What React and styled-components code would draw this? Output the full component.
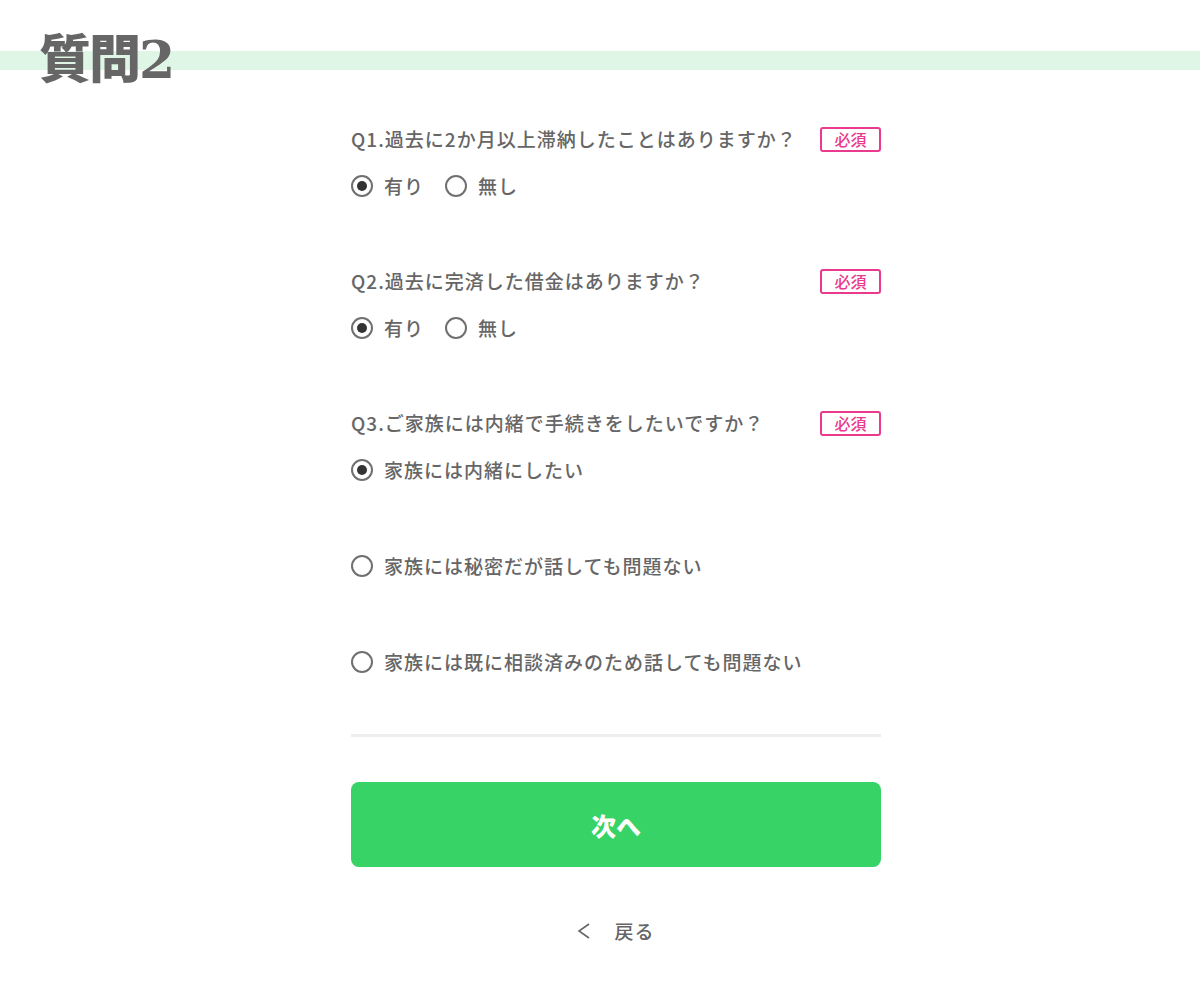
import React from 'react';
import styled, { createGlobalStyle } from 'styled-components';

const GlobalStyle = createGlobalStyle`
  body {
    margin: 0;
    background: #fff;
    font-family: "Noto Sans CJK JP", "Noto Sans", sans-serif;
    color: #666;
  }
`;

const Header = styled.header`
  height: 100px;
  padding: 30px 0 0 39px;
  box-sizing: border-box;
  background: linear-gradient(
    to bottom,
    transparent 51px,
    #dff6e6 51px,
    #dff6e6 70px,
    transparent 70px
  );
`;

const Title = styled.h1`
  margin: 0;
  font-family: "DejaVu Serif", "Noto Sans CJK JP", serif;
  font-size: 52px;
  line-height: 60px;
  font-weight: 900;
  color: #666;
  letter-spacing: -2px;
`;

const Main = styled.main`
  padding: 26px 0 40px 32px;
`;

const Form = styled.form`
  width: 530px;
  margin: 0 auto;
  display: flex;
  flex-direction: column;
`;

const Question = styled.section`
  display: flex;
  flex-direction: column;
  gap: 23px;
  & + & {
    margin-top: 71px;
  }
`;

const QuestionHead = styled.div`
  display: flex;
  align-items: center;
  justify-content: space-between;
  height: 26px;
`;

const QuestionText = styled.p`
  margin: 0;
  font-size: 19px;
  line-height: 26px;
  font-weight: 500;
  letter-spacing: 1px;
  color: #666;
`;

const Required = styled.span`
  width: 61px;
  height: 25px;
  box-sizing: border-box;
  border: 2px solid #ea3a8d;
  border-radius: 3px;
  color: #ea3a8d;
  font-size: 16px;
  font-weight: 500;
  line-height: 21px;
  text-align: center;
`;

const Options = styled.div`
  display: flex;
  flex-direction: ${({ $stacked }) => ($stacked ? 'column' : 'row')};
  gap: ${({ $stacked }) => ($stacked ? '74px' : '21px')};
`;

const Option = styled.label`
  display: flex;
  align-items: center;
  gap: 11px;
  height: 22px;
  font-size: 19px;
  font-weight: 500;
  line-height: 22px;
  letter-spacing: 1px;
  color: #666;
  cursor: pointer;
`;

const Radio = styled.span`
  width: 22px;
  height: 22px;
  box-sizing: border-box;
  border: 2px solid #707070;
  border-radius: 50%;
  display: flex;
  align-items: center;
  justify-content: center;
  flex-shrink: 0;
  &::after {
    content: '';
    width: 10px;
    height: 10px;
    border-radius: 50%;
    background: ${({ $checked }) => ($checked ? '#333' : 'transparent')};
  }
`;

const Divider = styled.hr`
  margin: 61px 0 0;
  border: none;
  height: 3px;
  background: #eeeeee;
`;

const NextButton = styled.button`
  margin-top: 45px;
  height: 85px;
  border: none;
  border-radius: 8px;
  background: #38d366;
  color: #fff;
  font-family: inherit;
  font-size: 25px;
  font-weight: 900;
  cursor: pointer;
`;

const BackLink = styled.a`
  margin-top: 51px;
  align-self: center;
  display: flex;
  align-items: center;
  gap: 23px;
  font-size: 19px;
  font-weight: 500;
  line-height: 26px;
  letter-spacing: 1px;
  color: #666;
  text-decoration: none;
  cursor: pointer;
`;

const questions = [
  {
    id: 'q1',
    text: 'Q1.過去に2か月以上滞納したことはありますか？',
    options: ['有り', '無し'],
    checked: 0,
  },
  {
    id: 'q2',
    text: 'Q2.過去に完済した借金はありますか？',
    options: ['有り', '無し'],
    checked: 0,
  },
  {
    id: 'q3',
    text: 'Q3.ご家族には内緒で手続きをしたいですか？',
    options: [
      '家族には内緒にしたい',
      '家族には秘密だが話しても問題ない',
      '家族には既に相談済みのため話しても問題ない',
    ],
    checked: 0,
    stacked: true,
  },
];

const App = () => {
  return (
    <>
      <GlobalStyle />
      <Header>
        <Title>質問2</Title>
      </Header>
      <Main>
        <Form onSubmit={(e) => e.preventDefault()}>
          {questions.map((q) => (
            <Question key={q.id}>
              <QuestionHead>
                <QuestionText>{q.text}</QuestionText>
                <Required>必須</Required>
              </QuestionHead>
              <Options $stacked={q.stacked}>
                {q.options.map((label, i) => (
                  <Option key={label}>
                    <Radio $checked={i === q.checked} />
                    {label}
                  </Option>
                ))}
              </Options>
            </Question>
          ))}
          <Divider />
          <NextButton type="submit">次へ</NextButton>
          <BackLink>
            <svg width="14" height="18" viewBox="0 0 14 18" fill="none">
              <path d="M12 2 L2 9 L12 16" stroke="#666" strokeWidth="1.6" />
            </svg>
            戻る
          </BackLink>
        </Form>
      </Main>
    </>
  );
};

export default App;
